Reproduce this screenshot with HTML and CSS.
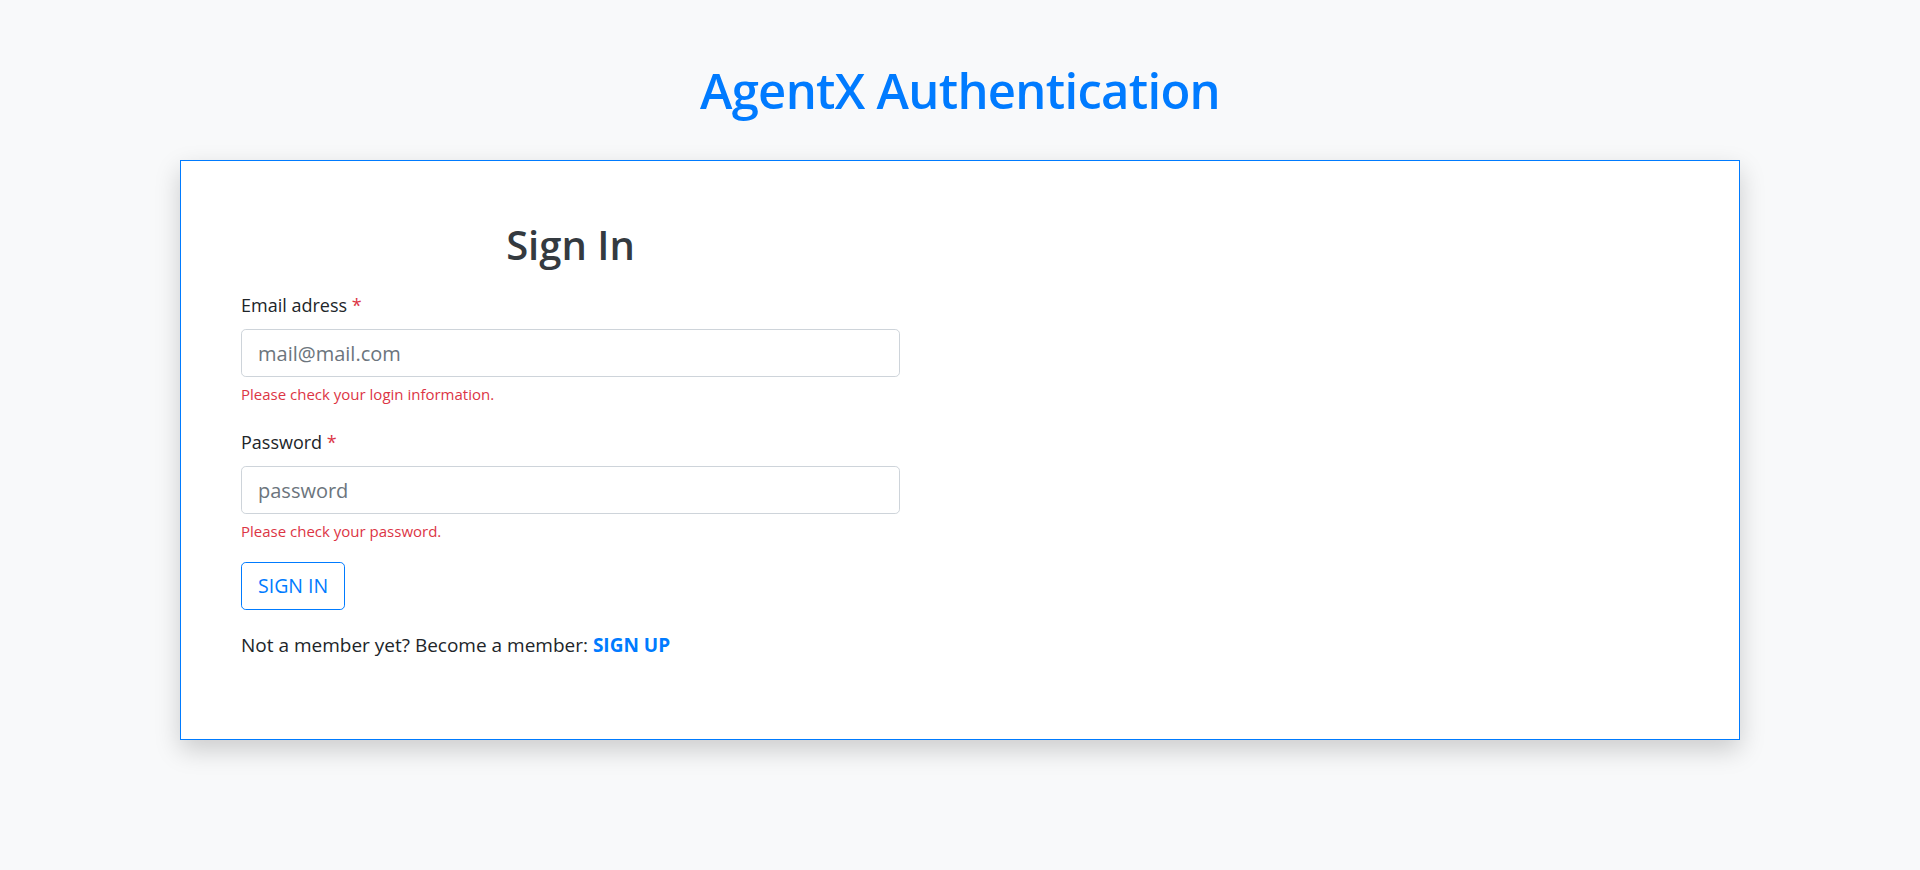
FILE: index.html
```html
<!DOCTYPE html>
<html lang="en">
<head>
<meta charset="utf-8">
<title>AgentX Authentication</title>
<link rel="stylesheet" href="styles.css">
</head>
<body>
  <h1 class="page-title">AgentX Authentication</h1>
  <div class="card">
    <form class="signin-form" onsubmit="return false;">
      <h2 class="form-title">Sign In</h2>
      <div class="form-group">
        <label class="form-label" for="email">Email adress <span class="req">*</span></label>
        <input class="form-control" id="email" type="email" placeholder="mail@mail.com">
        <div class="invalid-feedback">Please check your login information.</div>
      </div>
      <div class="form-group">
        <label class="form-label" for="password">Password <span class="req">*</span></label>
        <input class="form-control" id="password" type="password" placeholder="password">
        <div class="invalid-feedback">Please check your password.</div>
      </div>
      <button class="btn-outline" type="submit">SIGN IN</button>
      <p class="signup-line">Not a member yet? Become a member: <a class="signup-link" href="#">SIGN UP</a></p>
    </form>
  </div>
</body>
</html>
```

FILE: styles.css
```css
* {
  box-sizing: border-box;
}

html, body {
  margin: 0;
  padding: 0;
}

html {
  background: #f8f9fa;
}

body {
  min-height: 100vh;
  background: #f8f9fa;
  font-family: "Open Sans", "Noto Sans", "Liberation Sans", sans-serif;
  color: #212529;
  padding-top: 60px;
  padding-bottom: 60px;
}

.page-title {
  margin: 0 0 39px 0;
  text-align: center;
  font-size: 49px;
  line-height: 61px;
  font-weight: 600;
  letter-spacing: -0.7px;
  color: #007bff;
}

.card {
  margin: 0 180px;
  background: #ffffff;
  border: 1px solid #007bff;
  box-shadow: 0 10px 24px rgba(0, 0, 0, 0.18);
  padding: 60px 60px 79px 60px;
}

.signin-form {
  width: 659px;
  display: flex;
  flex-direction: column;
  align-items: flex-start;
}

.form-title {
  align-self: stretch;
  margin: 0 0 24px 0;
  text-align: center;
  font-size: 40px;
  line-height: 48px;
  font-weight: 600;
  color: #343a40;
}

.form-group {
  align-self: stretch;
  display: flex;
  flex-direction: column;
  align-items: flex-start;
  margin-bottom: 25px;
}

.form-group:last-of-type {
  margin-bottom: 20px;
}

.form-label {
  font-size: 18px;
  line-height: 24px;
  margin-bottom: 12px;
  color: #212529;
}

.req {
  color: #dc3545;
}

.form-control {
  width: 100%;
  height: 48px;
  padding: 8px 16px;
  font-family: inherit;
  font-size: 20px;
  line-height: 30px;
  color: #495057;
  background: #ffffff;
  border: 1px solid #ced4da;
  border-radius: 4.8px;
  outline: none;
}

.form-control::placeholder {
  color: #6c757d;
  opacity: 1;
}

.invalid-feedback {
  margin-top: 6px;
  font-size: 15px;
  line-height: 22px;
  color: #dc3545;
}

.btn-outline {
  height: 48px;
  padding: 8px 16px;
  font-family: inherit;
  font-size: 19.5px;
  line-height: 30px;
  color: #007bff;
  background: transparent;
  border: 1px solid #007bff;
  border-radius: 4.8px;
  cursor: pointer;
}

.signup-line {
  margin: 20px 0 0 0;
  font-size: 19px;
  line-height: 30px;
  color: #212529;
}

.signup-link {
  color: #007bff;
  font-weight: 700;
  text-decoration: none;
}
```
